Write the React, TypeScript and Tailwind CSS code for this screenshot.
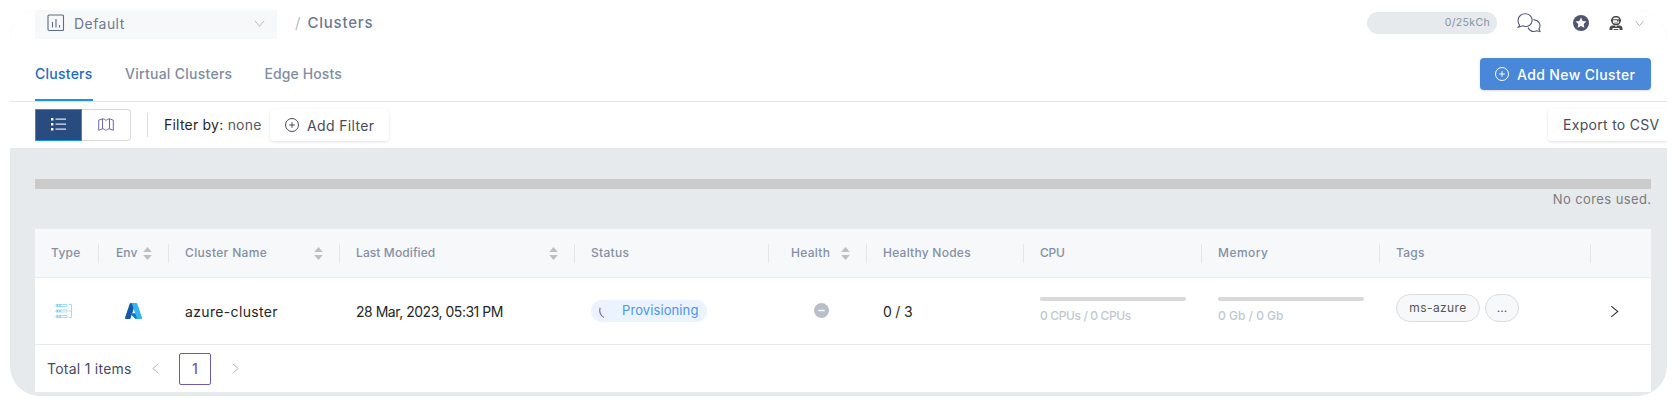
import React from "react";

const Chevron = ({ d, className }: { d: string; className: string }) => (
  <svg viewBox="0 0 12 12" fill="none" stroke="currentColor" className={className}>
    <path d={d} />
  </svg>
);
const DOWN = "M1 3l5 6 5-6";
const RIGHT = "M3 1l6 5-6 5";
const LEFT = "M9 1L3 6l6 5";

const PlusCircle = ({ className }: { className: string }) => (
  <svg viewBox="0 0 14 14" fill="none" stroke="currentColor" className={className}>
    <circle cx="7" cy="7" r="6.5" />
    <path d="M7 4.2v5.6M4.2 7h5.6" />
  </svg>
);

const Sorter = () => (
  <svg viewBox="0 0 9 13" className="h-[13px] w-[9px] shrink-0 fill-[#bfbfbf]">
    <path d="M4.5 0L8.8 5H.2zM4.5 13L.2 8h8.6z" />
  </svg>
);

type Col = { label: string; w: string; track: string; pad?: string; sort?: boolean };
const cols: Col[] = [
  { label: "Type", w: "w-[64px]", track: "tracking-[0.3px]" },
  { label: "Env", w: "w-[70px]", track: "tracking-[0.1px]", pad: "pl-[17px] pr-4", sort: true },
  { label: "Cluster Name", w: "w-[171px]", track: "tracking-[0.35px]", sort: true },
  { label: "Last Modified", w: "w-[235px]", track: "tracking-[0.1px]", sort: true },
  { label: "Status", w: "w-[194px]", track: "tracking-[0.3px]" },
  { label: "Health", w: "w-[98px]", track: "tracking-[0.3px]", pad: "pl-[22px] pr-4", sort: true },
  { label: "Healthy Nodes", w: "w-[157px]", track: "tracking-[0.25px]" },
  { label: "CPU", w: "w-[178px]", track: "tracking-[-0.3px]" },
  { label: "Memory", w: "w-[178px]", track: "tracking-[0.45px]" },
  { label: "Tags", w: "w-[211px]", track: "tracking-[0.3px]" },
];

const Usage = ({ text, track }: { text: string; track: string }) => (
  <div className="w-[178px] px-4 pt-[19px]">
    <div className="h-1 w-[146px] rounded-full bg-[#d9d9d9]" />
    <div className={`mt-[6px] text-[12px] leading-[18px] font-medium whitespace-nowrap text-[#c1c7d0] ${track}`}>{text}</div>
  </div>
);

export default function App() {
  return (
    <div className="h-[406px] w-full overflow-hidden bg-white p-[10px] pb-0 font-['Inter',sans-serif] text-[14px] text-[#262626]">
      <div className="flex h-[386px] w-[1657px] flex-col overflow-hidden rounded-[30px] bg-[#e6eaed]">
        <header className="flex h-[46px] shrink-0 items-start bg-white pl-[25px]">
          <div className="flex h-[29px] w-[242px] items-center bg-[#f7f8fa] pr-3 pl-3 text-[#6d7a90]">
            <svg viewBox="0 0 18 18" fill="none" stroke="#5c6b87" strokeWidth="1.1" className="-mt-[3px] size-[18px]">
              <rect x="1" y="1" width="15.500" height="15.500" rx="1" />
              <path d="M5.5 8v5.5M9 5v8.5M12.5 11v2.5" />
            </svg>
            <span className="-mt-[3px] ml-[9px] tracking-[0.45px]">Default</span>
            <Chevron d={DOWN} className="-mt-[3px] ml-auto size-[11px] text-[#b4b8be]" />
          </div>
          <span className="mt-[2px] ml-[18px] text-[15px] leading-[21px] text-[#b6bdc8]">/</span>
          <span className="mt-[2px] ml-[7px] text-[15px] leading-[21px] font-medium tracking-[0.8px] text-[#6b7890]">Clusters</span>
          <div className="ml-auto flex h-[26px] items-center pr-[23px]">
            <div className="flex h-[22px] w-[130px] items-center justify-end rounded-full bg-[#e6eaed] pr-[7px] text-[10.5px] tracking-[0.35px] text-[#8592a6]">0/25kCh</div>
            <svg viewBox="0 0 24 20" fill="none" stroke="#545877" strokeWidth="1.1" className="ml-[20px] h-5 w-6">
              <path d="M2.600 12.400C.2 9.300.6 4.400 3.600 2.300c3-2.200 7.600-2 10 .8 2.500 3 1.800 7-1 9.100-2.200 1.500-4.600 1.600-6.800.6L1.300 14.200z" />
              <path d="M16.200 6.700c5.600-.1 8.300 5.100 5.800 9l1 2.900-3.300-.8c-3.600 1.700-7.500.3-8.600-3.300" />
            </svg>
            <svg viewBox="0 0 16 16" className="ml-[32px] size-4">
              <circle cx="8" cy="8" r="8" fill="#515572" />
              <path fill="#fff" d="M8 2.600l1.650 3.400 3.750.5-2.750 2.600.7 3.700L8 11l-3.350 1.800.7-3.700L2.600 6.500 6.350 6z" />
            </svg>
            <svg viewBox="0 0 14 15" className="ml-5 h-[15px] w-[14px]">
              <rect x="3" y=".8" width="8" height="7.600" rx="3.400" fill="#fff" stroke="#484848" strokeWidth="1.500" />
              <path fill="#484848" d="M2 3.600h2.200v2H2zM9.800 3.600H12v2H9.800zM4.200 3.200h5.600v1H4.200zM8 4.200h1.500v1.300H8zM5.300 6.500h3.400v.8H5.300z" />
              <path fill="#484848" fillRule="evenodd" d="M3.500 9.500h7c2 0 3 1.500 3 3.200V14H.5v-1.300c0-1.700 1-3.200 3-3.200zM3.500 12h7v2h-7zM6.300 9.500h1.400v1.300H6.300z" />
              <path fill="#484848" d="M4.700 13h4.600v1H4.700z" />
            </svg>
            <Chevron d={DOWN} className="ml-[12px] size-[9px] text-[#9a9ea6]" />
          </div>
        </header>

        <nav className="flex h-[46px] shrink-0 items-start border-b border-[#e4e7ea] bg-white pr-4 pl-[25px] font-medium text-[#808c9f]">
          <div className="h-[45px] w-[58px] border-b-2 border-[#1890ff] pt-[8px] leading-[20px] tracking-[0.25px] whitespace-nowrap text-[#2268cf]">Clusters</div>
          <div className="ml-8 pt-[8px] leading-[20px] tracking-[0.27px]">Virtual Clusters</div>
          <div className="ml-8 pt-[8px] leading-[20px] tracking-[0.12px]">Edge Hosts</div>
          <button className="mt-[2px] ml-auto flex h-8 w-[171px] items-center rounded-[4px] bg-[#4987d9] pl-[15px] text-white shadow-sm">
            <PlusCircle className="size-[14px]" />
            <span className="ml-2 tracking-[0.37px] whitespace-nowrap">Add New Cluster</span>
          </button>
        </nav>

        <div className="flex h-[46px] shrink-0 items-start bg-white pt-[7px] pl-[25px]">
          <div className="flex h-8 w-[47px] items-center justify-center border border-[#1890ff] bg-[#284b80] text-white">
            <svg viewBox="0 0 15 13" className="-mt-[2px] h-[13px] w-[15px] fill-current">
              <path d="M0 0h2.400v2.400H0zM0 5h2.400v2.400H0zM0 10h2.400v2.400H0z" />
              <path fillOpacity=".85" d="M4.500.600H15v1.200H4.500zM4.500 5.600H15v1.200H4.500zM4.500 10.600H15v1.200H4.500z" />
            </svg>
          </div>
          <div className="flex h-8 w-[49px] items-center justify-center rounded-r-sm border border-l-0 border-[#d9d9d9]">
            <svg viewBox="0 0 16 13" fill="none" stroke="#61569e" strokeWidth="0.9" className="-mt-[2px] h-[13px] w-4">
              <path d="M.7 2.200L4.500.800v10L.7 12.300zM4.500.800c2 0 3 1.500 3.500 1.500s1.500-1.500 3.500-1.500v10c-2 0-3 1.500-3.500 1.500s-1.500-1.500-3.500-1.500M11.500.800l3.800 1.400v10.100l-3.800-1.500" />
            </svg>
          </div>
          <div className="mt-1 ml-4 h-6 w-px bg-[#dcdcdc]" />
          <div className="ml-4 w-[106px] shrink-0 leading-8 tracking-[0.22px] whitespace-nowrap text-[#595959]"><span className="text-[#262626]">Filter by:</span> none</div>
          <button className="flex h-8 w-[119px] shrink-0 items-center rounded bg-white pl-[15px] text-[#484b60] shadow-[0_1px_3px_rgba(0,0,0,0.12)]">
            <PlusCircle className="size-[14px]" /><span className="ml-2 tracking-[0.35px]">Add Filter</span>
          </button>
          <button className="ml-auto h-8 w-[119px] shrink-0 rounded-l bg-white pb-[2px] pl-[15px] text-left tracking-[0.3px] whitespace-nowrap text-[#484b60] shadow-[0_1px_3px_rgba(0,0,0,0.12)]">Export to CSV</button>
        </div>

        <main className="flex flex-col pt-[31px] pl-[25px]">
          <div className="h-[10px] w-[1616px] bg-[#cbcbcb]" />
          <div className="h-10 w-[1616px] text-right text-[13px] leading-[20px] tracking-[0.4px] text-[#7b7b7b]"><span className="-mr-[0.5px]">No cores used.</span></div>
          <section className="w-[1616px] bg-white">
            <div className="flex h-[49px] items-center border-b border-[#eaecef] bg-[#f6f8fa] text-[12px] font-medium text-[#8390a5]">
              {cols.map((c) => (
                <div key={c.label} className={`flex h-[19px] shrink-0 items-center justify-between border-r border-[#e4e6ea] whitespace-nowrap ${c.w} ${c.pad ?? "px-4"}`}>
                  <span className={c.track}>{c.label}</span>
                  {c.sort && <Sorter />}
                </div>
              ))}
            </div>
            <div className="flex h-[67px] items-start border-b border-[#e6e8ea]">
              <div className="w-[64px] pt-[25px] pl-[20px]">
                <svg viewBox="0 0 18 16" fill="none" className="h-4 w-[18px]">
                  <path stroke="#a5dcf8" d="M1 1.500h11v2H1zM1 7h11v2H1zM1 12.500h11v2H1zM13.500 1.500h3v13h-3M13.500 8h3" />
                  <path stroke="#6cc5f1" strokeWidth="1.200" d="M2.500 1.500v2M5 1.500v2M2.500 7v2M5 7v2M2.500 12.500v2M5 12.500v2" />
                </svg>
              </div>
              <div className="w-[70px] pt-[25px] pl-[26px]">
                <svg viewBox="0 0 17 16" className="h-4 w-[17px]">
                  <path fill="#1459a8" d="M5.700 0h5L5.300 16H1.200A1.100 1.100 0 0 1 .1 14.500L4.700.800A1.100 1.100 0 0 1 5.700 0z" />
                  <path fill="#0078d4" d="M12.800 10.200H4.900L10.500 16h3.500z" />
                  <path fill="#38b5ef" d="M11.300 0H5.900c.5 0 .9.300 1 .800l4.700 13.700A1.100 1.100 0 0 1 10.600 16h5.300A1.100 1.100 0 0 0 17 14.500L12.300.800a1.100 1.100 0 0 0-1-.8z" />
                </svg>
              </div>
              <div className="w-[171px] px-4 leading-[67px] tracking-[0.35px]">azure-cluster</div>
              <div className="w-[235px] px-4 leading-[67px] tracking-[-0.48px] whitespace-nowrap">28 Mar, 2023, 05:31 PM</div>
              <div className="w-[194px] px-4 pt-[22px]">
                <div className="flex h-[22px] w-[116px] items-center rounded-full bg-[#eaf3ff] pl-2 text-[13px] text-[#4a94f0]">
                  <svg viewBox="0 0 7 12" fill="none" stroke="#7b70b5" strokeWidth="1.2" className="mt-[3px] h-3 w-[7px]"><path d="M1.200.700C-.2 4.500 1.700 9 5 10.500" /></svg>
                  <span className="ml-[16px] tracking-[0.1px]">Provisioning</span>
                </div>
              </div>
              <div className="w-[98px] pt-[25px] pl-[45px]">
                <svg viewBox="0 0 15 15" className="size-[15px]"><circle cx="7.500" cy="7.500" r="7.500" fill="#b8bfcb" /><path d="M4.300 7.500h6.400" stroke="#fff" strokeWidth="1.400" /></svg>
              </div>
              <div className="w-[157px] px-4 leading-[67px] tracking-[-0.2px]">0 / 3</div>
              <Usage text="0 CPUs / 0 CPUs" track="tracking-[-0.37px]" />
              <Usage text="0 Gb / 0 Gb" track="tracking-[0px]" />
              <div className="flex w-[211px] gap-[5px] pt-4 pl-4 text-[12px] text-[#555]">
                <span className="flex h-7 w-[84px] items-center justify-center rounded-full border border-[#dcdddf] bg-[#f6f8fa] tracking-[0.4px]">ms-azure</span>
                <span className="flex h-7 w-[34px] items-center justify-center rounded-full border border-[#dcdddf] bg-[#f6f8fa]">...</span>
              </div>
              <Chevron d={RIGHT} className="mt-[27px] ml-[17px] size-[13px] text-[#333]" />
            </div>
            <div className="flex h-[47px] items-center pl-3 text-[#484b60]">
              <span className="w-[85px] tracking-[0.25px] whitespace-nowrap">Total 1 items</span>
              <Chevron d={LEFT} className="ml-[18px] size-[11px] text-[#b0b0b0]" />
              <span className="ml-[18px] flex size-8 items-center justify-center rounded-[2px] border border-[#6c5bae] font-medium text-[#6c5bae]">1</span>
              <Chevron d={RIGHT} className="ml-[19px] size-[11px] text-[#b0b0b0]" />
            </div>
          </section>
        </main>
      </div>
    </div>
  );
}
